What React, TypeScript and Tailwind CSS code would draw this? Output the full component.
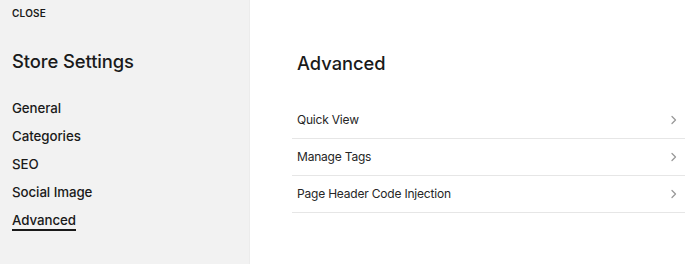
import React from "react";

const Chevron = () => (
  <svg width="8" height="10" viewBox="0 0 8 10" fill="none" className="shrink-0">
    <path d="M2 1.5 L5.5 5 L2 8.5" stroke="#9a9a9a" strokeWidth="1.3" strokeLinecap="round" strokeLinejoin="round" />
  </svg>
);

export default function App() {
  const nav = ["General", "Categories", "SEO", "Social Image", "Advanced"];
  const rows = ["Quick View", "Manage Tags", "Page Header Code Injection"];
  return (
    <div
      className="flex w-[700px] h-[264px] bg-white text-[#1a1a1a] overflow-hidden"
      style={{ fontFamily: "Inter, 'Liberation Sans', sans-serif" }}
    >
      <aside className="w-[250px] shrink-0 bg-[#f2f2f2] border-r border-[#ececec] pl-3 pt-[6px]">
        <div className="text-[10px] font-semibold tracking-[0.02em] leading-[14px]">CLOSE</div>
        <h1 className="mt-[29px] text-[18.4px] font-medium leading-[24px] tracking-[-0.005em]">Store Settings</h1>
        <nav className="mt-[27px] flex flex-col">
          {nav.map((n) => (
            <div key={n} className="h-[28px] flex items-start">
              <span
                className={
                  "text-[13.3px] font-medium leading-[17px] tracking-[-0.005em] " +
                  (n === "Advanced" ? "border-b-2 border-[#1a1a1a]" : "")
                }
              >
                {n}
              </span>
            </div>
          ))}
        </nav>
      </aside>
      <main className="flex-1 pl-[42px] pr-[15px] pt-[51px]">
        <h2 className="pl-[5px] text-[18.3px] font-medium leading-[24px]">Advanced</h2>
        <div className="mt-[27px] flex flex-col">
          {rows.map((r) => (
            <div
              key={r}
              className="h-[37px] flex items-center justify-between pl-[5px] pr-[7px] border-b border-[#e6e6e6]"
            >
              <span className="text-[12px] leading-[18px] tracking-[-0.2px] text-[#262626]">{r}</span>
              <Chevron />
            </div>
          ))}
        </div>
      </main>
    </div>
  );
}
